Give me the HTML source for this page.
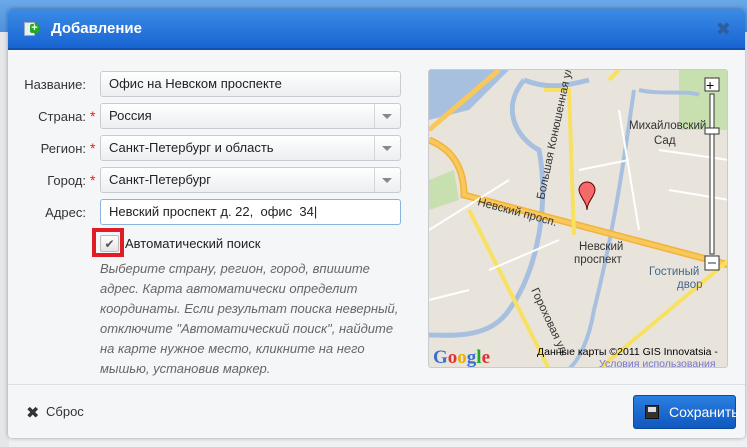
<!DOCTYPE html>
<html><head><meta charset="utf-8"><style>
*{box-sizing:border-box;margin:0;padding:0}
body{width:747px;height:447px;overflow:hidden;position:relative;background:#eef0f2;font-family:"Liberation Sans","DejaVu Sans",sans-serif;font-size:13px;color:#333}
.topbar{position:absolute;left:0;top:0;width:747px;height:32px;background:linear-gradient(#6aa8e8,#4f90dc)}
.side{position:absolute;left:0;top:32px;width:9px;height:415px;background:#e4e6e8}
.dlg{position:absolute;left:8px;top:9px;width:737px;height:429px;background:#f5f6f8;border-radius:4px;box-shadow:0 0 4px rgba(0,0,0,.35);overflow:hidden}
.hdr{height:41px;background:linear-gradient(#3b8be6,#1865d2);border-bottom:2px solid #1050b0;color:#fff;font-weight:bold;font-size:15px;line-height:40px;padding-left:43px;position:relative}
.hdr .ic{position:absolute;left:16px;top:13px;width:11px;height:14px;background:#e8eef5;border:1px solid #9ab}
.hdr .ic:after{content:"+";position:absolute;left:5px;top:1px;width:9px;height:9px;line-height:8px;font-size:11px;color:#fff;background:#2a2;border-radius:2px;text-align:center}
.hdr .x{position:absolute;right:14px;top:0;color:#2d5d9a;font-size:18px}
.lbl{position:absolute;width:70px;text-align:right;left:8px;color:#333;font-size:13px}
.star{position:absolute;left:82px;color:#d22;font-size:14px}
.inp{position:absolute;left:92px;width:301px;height:26px;border:1px solid #c8ccd0;border-radius:3px;background:linear-gradient(#fff,#eceef0);padding-left:8px;line-height:24px;font-size:13px;color:#222}
.sel:after{content:"";position:absolute;right:0;top:0;width:25px;height:24px;border-left:1px solid #d4d6d8}
.sel:before{content:"";position:absolute;right:8px;top:10px;border:5px solid transparent;border-top:5px solid #888}
.hint{position:absolute;left:92px;top:250px;width:302px;font-style:italic;color:#666;font-size:13px;line-height:20px}
.map{position:absolute;left:420px;top:60px;width:300px;height:299px;border:1px solid #c8ccd0;border-radius:3px;overflow:hidden;background:#e8e4dc}
.foot{position:absolute;left:0;top:375px;width:737px;border-top:1px solid #dde0e3}
.btn{position:absolute;left:625px;top:386px;width:103px;height:34px;border-radius:3px;background:linear-gradient(#2b7fe0,#0f58bf);border:1px solid #0c4aa0;color:#fff;font-size:14px;line-height:32px;padding-left:35px}
</style></head><body>
<div class="topbar"></div><div class="side"></div>
<div class="dlg">
<div class="hdr"><span class="ic"></span>Добавление<span class="x">✖</span></div>
<div class="lbl" style="top:68px">Название:</div>
<div class="inp" style="top:62px">Офис на Невском проспекте</div>
<div class="lbl" style="top:100px">Страна:</div><div class="star" style="top:99px">*</div>
<div class="inp sel" style="top:94px">Россия</div>
<div class="lbl" style="top:132px">Регион:</div><div class="star" style="top:131px">*</div>
<div class="inp sel" style="top:126px">Санкт-Петербург и область</div>
<div class="lbl" style="top:164px">Город:</div><div class="star" style="top:163px">*</div>
<div class="inp sel" style="top:158px">Санкт-Петербург</div>
<div class="lbl" style="top:196px">Адрес:</div>
<div class="inp" style="top:190px;background:#fff;border-color:#8ab4e0">Невский проспект д. 22,&nbsp; офис&nbsp; 34|</div>
<div style="position:absolute;left:84px;top:219px;width:32px;height:29px;border:4px solid #e21c24"></div>
<div style="position:absolute;left:92px;top:226px;width:19px;height:17px;border:1px solid #bbb;border-radius:2px;background:linear-gradient(#fff,#e4e4e4);color:#555;font-size:12px;text-align:center;line-height:16px">✔</div>
<div style="position:absolute;left:117px;top:227px;font-size:13px;color:#222">Автоматический поиск</div>
<div class="hint">Выберите страну, регион, город, впишите адрес. Карта автоматически определит координаты. Если результат поиска неверный, отключите "Автоматический поиск", найдите на карте нужное место, кликните на него мышью, установив маркер.</div>
<div class="map"><svg width="300" height="299" viewBox="0 0 300 299">
<rect width="300" height="299" fill="#e8e4dc"/>
<path d="M0 0H80L40 40L0 50Z" fill="#a8c0e0"/>
<rect x="250" y="0" width="50" height="60" fill="#c8dfb0"/>
<path d="M0 110L25 100L30 130L0 140Z" fill="#c8dfb0"/>
<path d="M95 10C70 40 90 70 110 80C120 130 110 200 80 240C60 270 20 265 0 265" stroke="#a8c0e0" stroke-width="5" fill="none"/>
<path d="M95 10C120 20 140 15 160 10" stroke="#a8c0e0" stroke-width="5" fill="none"/>
<path d="M205 20C195 90 185 160 165 240C160 270 150 290 140 299" stroke="#a8c0e0" stroke-width="4" fill="none"/>
<path d="M210 20C230 25 260 20 270 25" stroke="#a8c0e0" stroke-width="4" fill="none"/>
<path d="M0 70C25 80 35 100 35 125L300 195" stroke="#f2b23c" stroke-width="7" fill="none"/>
<path d="M0 70C25 80 35 100 35 125L300 195" stroke="#f8c85a" stroke-width="4" fill="none"/>
<path d="M70 0L0 60" stroke="#f8c85a" stroke-width="5"/>
<path d="M40 140L120 299M300 190L170 299M115 20L140 20L145 165M180 10L190 0" stroke="#f8e060" stroke-width="4" fill="none"/>
<path d="M0 160L80 110M60 200L130 170M0 230L40 220M190 40L210 160M230 80L300 90M240 120L300 130M150 100L200 90" stroke="#fff" stroke-width="2" fill="none"/>
<g font-family="Liberation Sans" font-size="11.5" fill="#333">
<text x="200" y="59">Михайловский</text><text x="225" y="74">Сад</text>
<text x="48" y="135" transform="rotate(15 48 135)">Невский просп.</text>
<text x="150" y="180" fill="#333">Невский</text><text x="145" y="193">проспект</text>
<text x="220" y="205" fill="#468">Гостиный</text><text x="248" y="218" fill="#468">двор</text>
<text x="115" y="130" transform="rotate(-78 115 130)">Большая Конюшенная ул.</text>
<text x="102" y="220" transform="rotate(65 102 220)">Гороховая ул.</text>
<text x="108" y="285" fill="#000" font-size="10.5">Данные карты ©2011 GIS Innovatsia -</text>
<text x="170" y="297" fill="#77c" font-size="10.5">Условия использования</text>
<text x="4" y="293" font-family="Liberation Serif" font-size="19" font-weight="bold" fill="#3a6fd0">G<tspan fill="#d33">o</tspan><tspan fill="#e9b000">o</tspan>g<tspan fill="#2a2">l</tspan><tspan fill="#d33">e</tspan></text>
</g>
<path d="M150 120A8 8 0 1 1 166 120C166 126 158 132 158 140C158 132 150 126 150 120Z" fill="#f46a6a" stroke="#600" stroke-width="1"/>
<rect x="276" y="8" width="14" height="13" fill="#fff" stroke="#333"/><text x="277" y="20" font-size="14" font-family="Liberation Sans">+</text>
<rect x="281" y="24" width="4" height="160" fill="#fff" stroke="#333"/>
<rect x="276" y="58" width="14" height="6" fill="#fff" stroke="#333"/>
<rect x="276" y="186" width="14" height="14" fill="#fff" stroke="#333"/><path d="M279 193H287" stroke="#333"/>
</svg></div>
<div class="foot"></div>
<div style="position:absolute;left:18px;top:394px;font-size:16px;color:#333;font-weight:bold">✖</div>
<div style="position:absolute;left:38px;top:395px;font-size:13px;color:#333">Сброс</div>
<div class="btn"><span style="position:absolute;left:11px;top:9px;width:14px;height:14px;background:#333;border:1px solid #111"><span style="position:absolute;left:2px;top:1px;width:8px;height:5px;background:#ddd"></span></span>Сохранить</div>
</div>
</body></html>
